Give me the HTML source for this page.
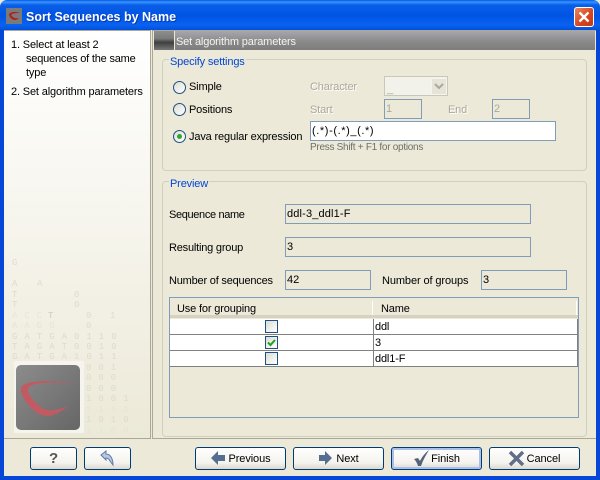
<!DOCTYPE html>
<html><head><meta charset="utf-8"><style>
html,body{margin:0;padding:0;background:#fff}
#w{position:relative;width:600px;height:480px;overflow:hidden;font:11px/14px "Liberation Sans",sans-serif;color:#000;background:#ece9d8}
#w div,#w span.t{position:absolute}
.t{white-space:nowrap;margin-top:1px;letter-spacing:-.15px}
.g{color:#aca899}
.f{border:1px solid #7f9db9;box-sizing:border-box;padding-left:1px;line-height:19px;background:#ece9d8;height:20px}
.grp{border:1px solid #d0d0bf;border-radius:4px;box-sizing:border-box}
.lg{color:#0046d5;background:#ece9d8;padding:0 1px}
.btn{box-sizing:border-box;height:23px;top:447px;border:1px solid #003c74;border-radius:3px;background:linear-gradient(#fff,#f4f3ee 70%,#dcd8ce);text-align:center;line-height:22px;letter-spacing:-.1px}
.rad{width:13px;height:13px;border:1px solid #1c5180;border-radius:50%;box-sizing:border-box;background:linear-gradient(135deg,#dcdcd4,#fff);left:173px}
.cb{width:13px;height:13px;left:265px;border:1px solid #1c5180;box-sizing:border-box;background:linear-gradient(135deg,#dcdcd4,#fff)}
.row{left:170px;width:408px;height:15px;background:#fff;border-bottom:1px solid #808080}
</style></head><body><div id="w">
<div style="left:0;top:0;width:600px;height:30px;background:linear-gradient(#0058e6 0,#3a93ff 2px,#0a5fe8 5px,#0054e3 16px,#0a62f0 25px,#0050d8 30px);border-radius:7px 7px 0 0"></div>
<div style="left:0;top:30px;width:4px;height:450px;background:#0747d8"></div>
<div style="left:596px;top:30px;width:4px;height:450px;background:#0747d8"></div>
<div style="left:0;top:476px;width:600px;height:4px;background:#0747d8"></div>
<svg style="position:absolute;left:6px;top:8px" width="16" height="16"><rect width="16" height="16" fill="#7a7a7a"/><path d="M14 5C9 3 5 4 3 6C3 9 6 12 9 12C11 12 12 11 13 10C10 11 7 10 5 7C7 5 10 5 14 5Z" fill="#b02020"/></svg>
<span class="t" style="left:26px;top:8px;font:bold 12.5px/17px 'Liberation Sans',sans-serif;color:#fff;text-shadow:1px 1px 0 #0a3ab0;letter-spacing:0">Sort Sequences by Name</span>
<div style="left:574px;top:7px;width:20px;height:20px;box-sizing:border-box;border:1px solid #fff;border-radius:3px;background:linear-gradient(135deg,#e8875f,#d5431d 60%,#c23a16)"></div>
<svg style="position:absolute;left:574px;top:7px" width="20" height="20"><path d="M5.5 5.5L14.5 14.5M14.5 5.5L5.5 14.5" stroke="#fff" stroke-width="2.4"/></svg>

<div style="left:4px;top:30px;width:147px;height:409px;box-sizing:border-box;border:1px solid #aca899;border-width:1px 1px 1px 0;background:linear-gradient(#fff,#ece9d8)"></div>
<span class="t" style="left:11px;top:37px">1. Select at least 2</span>
<span class="t" style="left:26px;top:51px;letter-spacing:-.2px">sequences of the same</span>
<span class="t" style="left:26px;top:65px">type</span>
<span class="t" style="left:11px;top:84px">2. Set algorithm parameters</span>

<svg style="position:absolute;left:10px;top:255px" width="125" height="190" font-family="Liberation Mono,monospace" font-size="9" fill="#dddbce" style="word-spacing:1.6px">
<g style="word-spacing:1.6px">
<text x="2" y="10">G</text><text x="2" y="31">A</text><text x="27" y="31">A</text>
<text x="2" y="42">T</text><text x="64" y="42">0</text><text x="2" y="52">T</text><text x="64" y="52">0</text>
<text x="2" y="63" fill="#e8e6da">A C C</text><text x="38" y="63" fill="#cfcdc0">T</text><text x="76" y="63">0</text><text x="100" y="63">1</text>
<text x="2" y="73" fill="#e6e4d8">A A G G</text><text x="76" y="73">0</text>
<text x="2" y="84">G A T G A 0 1 1 0</text><text x="2" y="94">T A G A T 0 0 1 0</text><text x="2" y="104">G A T G A 1 0 1 1</text>
<text x="76" y="115">0 0 1</text><text x="76" y="125">0 0 0</text><text x="76" y="136">0 0 0</text><text x="76" y="146">1 0 0 1</text><text x="76" y="157" fill="#e6e4d8">1 1 1 1</text><text x="76" y="167">1 0 1 0</text><text x="76" y="178" fill="#e6e4d8">1 1 0 0</text>
</g>
</svg>
<div style="left:14px;top:361px;width:70px;height:72px;background:#f5f4ee"></div>
<div style="left:16px;top:365px;width:64px;height:65px;border-radius:5px;background:linear-gradient(135deg,#8c8c8c,#666)"></div>
<svg style="position:absolute;left:16px;top:365px" width="64" height="65"><path d="M60 19C45 17 28 15 18 17C8 18 4 21 5 26C7 36 20 51 31 51C38 51 46 46 52 41C45 44 37 46 31 45C22 42 14 33 12 26C11 21 18 19 26 18C38 17 50 18 60 19Z" fill="#c25a62"/></svg>

<div style="left:152px;top:30px;width:444px;height:409px;box-sizing:border-box;border:1px solid #aca899;border-right:none;background:#ece9d8"></div>
<div style="left:154px;top:31px;width:20px;height:19px;background:linear-gradient(#8e8e8e,#7a7a7a 40%,#3f3f3f 60%,#777)"></div>
<div style="left:175px;top:31px;width:420px;height:19px;background:linear-gradient(#a8a6ad,#8a8a8a 55%,#7d7d7d)"></div>
<span class="t" style="left:176px;top:34px;color:#f4f4f4">Set algorithm parameters</span>

<div class="grp" style="left:162px;top:59px;width:425px;height:112px"></div>
<span class="t lg" style="left:169px;top:54px">Specify settings</span>
<div class="rad" style="top:81px"></div><span class="t" style="left:189px;top:79px">Simple</span>
<div class="rad" style="top:103px"></div><span class="t" style="left:189px;top:102px">Positions</span>
<div class="rad" style="top:130px"></div><div style="left:177px;top:134px;width:5px;height:5px;border-radius:50%;background:#2fa82f"></div><span class="t" style="left:189px;top:129px">Java regular expression</span>
<span class="t g" style="left:310px;top:79px;text-shadow:1px 1px 0 #fff">Character</span>
<div style="left:384px;top:76px;width:64px;height:20px;box-sizing:border-box;border:1px solid #c9c7ba;background:#f3f2ea"></div>
<span class="t g" style="left:387px;top:81px">_</span>
<div style="left:431px;top:78px;width:16px;height:17px;background:#e6e4d8;border:1px solid #f5f5f0;box-sizing:border-box"></div>
<svg style="position:absolute;left:433px;top:83px" width="12" height="8"><path d="M2 1L6 5L10 1" fill="none" stroke="#aca899" stroke-width="2"/></svg>
<span class="t g" style="left:310px;top:102px;text-shadow:1px 1px 0 #fff">Start</span>
<div class="f g" style="left:384px;top:99px;width:38px">1</div>
<span class="t g" style="left:448px;top:102px;text-shadow:1px 1px 0 #fff">End</span>
<div class="f g" style="left:492px;top:99px;width:38px">2</div>
<div class="f" style="left:310px;top:121px;width:246px;background:#fff;letter-spacing:.6px">(.*)-(.*)_(.*)</div>
<span class="t" style="left:310px;top:140px;font-size:10px;color:#6f6f66;letter-spacing:-.28px">Press Shift + F1 for options</span>

<div class="grp" style="left:162px;top:181px;width:425px;height:256px"></div>
<span class="t lg" style="left:169px;top:176px">Preview</span>
<span class="t" style="left:169px;top:207px;letter-spacing:-.35px">Sequence name</span>
<div class="f" style="left:285px;top:204px;width:246px;letter-spacing:.15px">ddl-3_ddl1-F</div>
<span class="t" style="left:169px;top:240px;letter-spacing:-.2px">Resulting group</span>
<div class="f" style="left:285px;top:237px;width:246px">3</div>
<span class="t" style="left:169px;top:273px;letter-spacing:-.2px">Number of sequences</span>
<div class="f" style="left:285px;top:270px;width:86px">42</div>
<span class="t" style="left:382px;top:273px;letter-spacing:-.1px">Number of groups</span>
<div class="f" style="left:481px;top:270px;width:86px">3</div>

<div style="left:169px;top:297px;width:410px;height:121px;box-sizing:border-box;border:1px solid #7f9db9;background:#ece9d8"></div>
<div style="left:170px;top:298px;width:408px;height:20px;box-sizing:border-box;border-bottom:3px solid #d6d2c2;background:#ece9d8"></div>
<div style="left:372px;top:301px;width:1px;height:14px;background:#fff"></div>
<div style="left:576px;top:301px;width:1px;height:14px;background:#fff"></div>
<span class="t" style="left:177px;top:301px">Use for grouping</span>
<span class="t" style="left:381px;top:301px">Name</span>
<div class="row" style="top:319px"></div><div class="row" style="top:335px"></div><div class="row" style="top:351px"></div>
<div style="left:373px;top:319px;width:1px;height:47px;background:#808080"></div>
<div style="left:577px;top:319px;width:1px;height:47px;background:#808080"></div>
<div class="cb" style="top:320px"></div><div class="cb" style="top:336px"></div><div class="cb" style="top:352px"></div>
<svg style="position:absolute;left:265px;top:336px" width="13" height="13"><path d="M3 6.5L5.5 9L10 4" fill="none" stroke="#21a121" stroke-width="2"/></svg>
<span class="t" style="left:375px;top:319px">ddl</span>
<span class="t" style="left:375px;top:335px">3</span>
<span class="t" style="left:375px;top:351px">ddl1-F</span>

<div style="left:4px;top:439px;width:592px;height:37px;background:#ece9d8"></div>
<div class="btn" style="left:30px;width:47px;font-weight:bold;font-size:15px;color:#555">?</div>
<div class="btn" style="left:84px;width:47px"></div>
<svg style="position:absolute;left:100px;top:450px" width="15" height="17"><path d="M1 5L6 1V4C10 4 13 8 13 15L10 11C9 9 8 8 6 8V10Z" fill="#b9c8e0" stroke="#5f7aa6"/></svg>
<div class="btn" style="left:195px;width:91px;padding-left:18px">Previous</div>
<svg style="position:absolute;left:210px;top:450px" width="16" height="16"><path d="M1 8L8 1V5H15V11H8V15Z" fill="#55708f"/></svg>
<div class="btn" style="left:293px;width:91px;padding-left:18px">Next</div>
<svg style="position:absolute;left:318px;top:450px" width="15" height="16"><path d="M14 8L7 1V5H1V11H7V15Z" fill="#55708f"/></svg>
<div class="btn" style="left:391px;width:91px;padding-left:18px;box-shadow:inset 0 0 0 2px #a9c0ea">Finish</div>
<svg style="position:absolute;left:413px;top:449px" width="17" height="18"><path d="M1 10L5 9L7 12C9 8 12 4 16 1C13 6 10 11 8 17H5C4 14 3 12 1 10Z" fill="#55647a"/></svg>
<div class="btn" style="left:489px;width:91px;padding-left:18px">Cancel</div>
<svg style="position:absolute;left:508px;top:450px" width="17" height="17"><path d="M2 2L15 15M15 2L2 15" stroke="#5f6f88" stroke-width="3.4"/></svg>
</div></body></html>
